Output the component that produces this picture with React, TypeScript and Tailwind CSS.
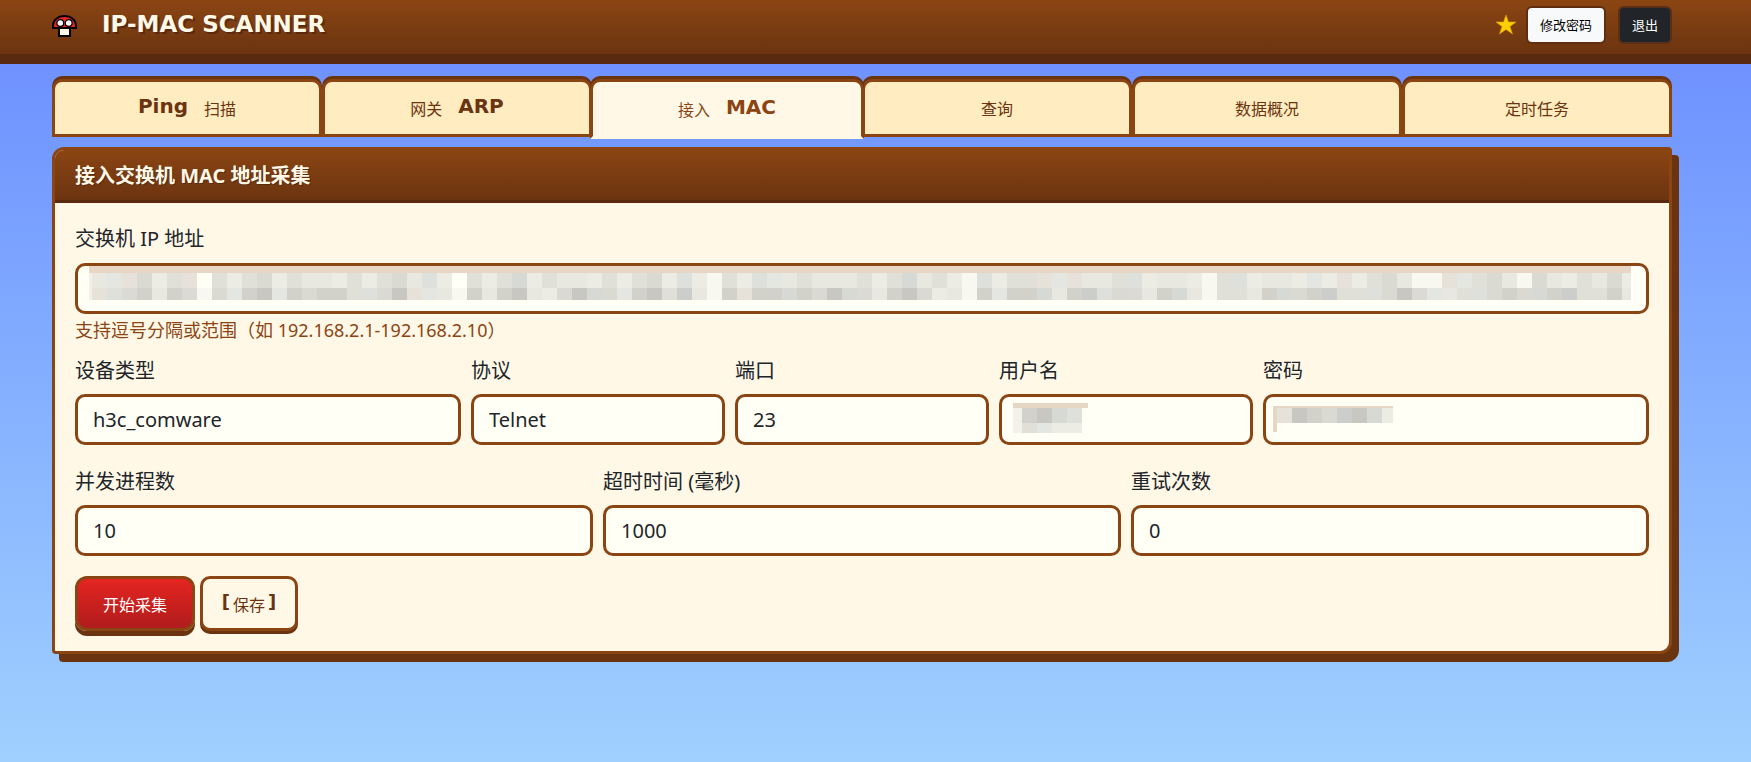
import { useState, type ReactNode } from "react";
import { clsx } from "clsx";

interface Tab {
  id: string;
  before?: string;
  label?: string;
  after?: string;
}

const TABS: Tab[] = [
  { id: "ping", before: "Ping", label: "扫描" },
  { id: "arp", label: "网关", after: "ARP" },
  { id: "mac", label: "接入", after: "MAC" },
  { id: "query", label: "查询" },
  { id: "stats", label: "数据概况" },
  { id: "cron", label: "定时任务" },
];

const PIXEL_FONT = "font-['DejaVu_Sans','Noto_Sans_CJK_SC',sans-serif] font-bold";
const CJK_FONT = "font-['Noto_Sans_CJK_SC',sans-serif] font-normal";

const INPUT_CLASS =
  "block h-[51px] w-full appearance-none rounded-[10px] border-3 border-[#8b4513] bg-[#fffff5] px-[15px] text-xl text-[#212529] outline-none";

// Shades used by the redaction mosaic, keyed by a single letter
const SHADES: Record<string, string> = {
  a: "#fffff5",
  b: "#f8f8f0",
  c: "#ecece4",
  d: "#e8e8e0",
  e: "#e0e0d9",
  f: "#dadad2",
  g: "#d2d2ca",
  h: "#c8c7c2",
  p: "#e6e2da",
  q: "#dcdad5",
  s: "#dde0db",
  t: "#d6d9d4",
  u: "#cbceca",
  w: "#e4e6e1",
  x: "#f5f1ea",
};

const IP_ROWS = [
  "dwpfcepaecefceddcecefdscaecetceddcecefcscbecswdedddecetdecbsceepwpddescddcbescddcwcpcefdbbpwefdbfdcedfc",
  "psqgdgqbfwghwgfggesfhpwdbgdghdcfhtfwgheudbgpggtgfhtqdghfcdbgwggtdgusfqdgtdbeedgtfgueesfhqwdesfgftgueegdqe",
];

function Mosaic({ row, y, height, x = 0 }: { row: string; y: number; height: number; x?: number }) {
  return (
    <>
      {row.split("").map((shade, i) => (
        <rect key={i} x={x + i * 15} y={y} width={15} height={height} fill={SHADES[shade]} />
      ))}
    </>
  );
}

function MushroomIcon() {
  return (
    <svg width="25" height="22" viewBox="0 0 25 22" aria-hidden="true">
      <path
        d="M1 13V10.500C1 5 6 1 12.500 1S24 5 24 10.500V13z"
        fill="#e52521"
        stroke="#000"
        strokeWidth="2"
      />
      <rect x="7" y="13" width="11" height="8" fill="#fff8e7" stroke="#000" strokeWidth="2" />
      <circle cx="8.300" cy="8" r="3.400" fill="#fff" stroke="#000" strokeWidth="1.200" />
      <circle cx="16.700" cy="8" r="3.400" fill="#fff" stroke="#000" strokeWidth="1.200" />
    </svg>
  );
}

function StarIcon() {
  return (
    <svg width="20" height="20" viewBox="0 0 20 20" aria-hidden="true">
      <path
        d="M10 0l2.500 7H20l-6 4.500 2.500 7.500L10 14.500 3.500 19 6 11.500 0 7h7.500z"
        fill="#fbd000"
        stroke="#e0a000"
        strokeWidth="0.6"
      />
    </svg>
  );
}

function Field({
  id,
  label,
  className,
  children,
}: {
  id: string;
  label: string;
  className?: string;
  children: ReactNode;
}) {
  return (
    <div className={className}>
      <label htmlFor={id} className="mb-2 block text-xl leading-[30px] text-[#212529]">
        {label}
      </label>
      <div className="relative">{children}</div>
    </div>
  );
}

export default function App() {
  const [activeTab, setActiveTab] = useState("mac");

  return (
    <div className="min-h-screen bg-linear-to-b from-[#6b8cff] to-[#a0d0ff] font-['Noto_Sans','Noto_Sans_CJK_SC',sans-serif]">
      <header className="flex h-16 justify-between border-b-10 border-[#5a2a10] bg-linear-to-b from-[#8b4513] to-[#6b3410] pr-[79px] pl-[52px]">
        <div className="flex h-[52px] items-center gap-[25px]">
          <MushroomIcon />
          <h1
            className={clsx(
              PIXEL_FONT,
              "pb-1 text-[23px] leading-none text-[#fff8e7] [text-shadow:2px_2px_0_#5a2a10]"
            )}
          >
            IP-MAC SCANNER
          </h1>
        </div>
        <div className="flex h-[50px] items-center">
          <StarIcon />
          <button
            className={clsx(
              CJK_FONT,
              "ml-[10px] h-[38px] rounded-md border-2 border-[#5f2e10] bg-[#f8f9fa] px-3 text-[13px] text-black"
            )}
          >
            修改密码
          </button>
          <button
            className={clsx(
              CJK_FONT,
              "ml-3 h-[38px] rounded-md border-2 border-[#5a2f17] bg-[#212529] px-3 text-[13px] text-white"
            )}
          >
            退出
          </button>
        </div>
      </header>

      <main className="pt-[15px] pr-[79px] pb-10 pl-[52px]">
        <nav className="grid grid-cols-6">
          {TABS.map((tab) => {
            const active = tab.id === activeTab;
            return (
              <button
                key={tab.id}
                onClick={() => setActiveTab(tab.id)}
                className={clsx(
                  "flex items-center justify-center gap-4 rounded-t-[10px] border-3 border-[#8b4513] pb-1 shadow-[0_-3px_0_#6b3410]",
                  active
                    ? "z-10 -mx-[2px] -mb-[2px] h-[60px] border-b-[#fff8e7] bg-[#fff8e7] text-[#8b4513]"
                    : "h-[58px] bg-[#ffecc1] text-[#6b3410]"
                )}
              >
                {tab.before && (
                  <span className={clsx(PIXEL_FONT, "text-xl leading-5")}>{tab.before}</span>
                )}
                <span className={clsx(CJK_FONT, "pt-1 text-base leading-5")}>{tab.label}</span>
                {tab.after && (
                  <span className={clsx(PIXEL_FONT, "text-xl leading-5")}>{tab.after}</span>
                )}
              </button>
            );
          })}
        </nav>

        <section className="mt-[10px] rounded-[12px_4px_12px_4px] border-3 border-[#8b4513] bg-[#fff8e7] shadow-[7px_8px_0_#6b3410]">
          <h2 className="rounded-tl-[9px] border-b-3 border-[#5a2a10] bg-linear-to-b from-[#8b4513] to-[#6b3410] px-5 pt-[11px] pb-[9px] text-xl leading-[30px] font-bold text-[#fff8e7] [text-shadow:1px_1px_0_#5a2a10]">
            接入交换机 MAC 地址采集
          </h2>

          <form className="px-5 pt-[21px] pb-5" onSubmit={(e) => e.preventDefault()}>
            <Field id="ips" label="交换机 IP 地址">
              <input id="ips" className={clsx(INPUT_CLASS, "mt-[9px]")} />
              <svg
                className="pointer-events-none absolute top-[3px] left-[14px] h-[34px] w-[calc(100%-32px)]"
                viewBox="0 0 1542 34"
                preserveAspectRatio="none"
                shapeRendering="crispEdges"
                aria-hidden="true"
              >
                <rect width="1542" height="7" fill="#e8d6c4" />
                <rect y="7" width="3" height="27" fill="#f5efe4" />
                <Mosaic row={IP_ROWS[0]} x={3} y={7} height={15} />
                <Mosaic row={IP_ROWS[1]} x={3} y={22} height={12} />
              </svg>
            </Field>
            <p className="mt-[3px] text-lg leading-[27px] text-[#8b4513]">
              支持逗号分隔或范围（如 192.168.2.1-192.168.2.10）
            </p>

            <div className="mt-3 grid grid-cols-12 gap-x-[10px] gap-y-[22px]">
              <Field id="device" label="设备类型" className="col-span-3">
                <select id="device" className={INPUT_CLASS} defaultValue="h3c_comware">
                  <option>h3c_comware</option>
                </select>
              </Field>
              <Field id="protocol" label="协议" className="col-span-2">
                <select id="protocol" className={INPUT_CLASS} defaultValue="Telnet">
                  <option>Telnet</option>
                  <option>SSH</option>
                </select>
              </Field>
              <Field id="port" label="端口" className="col-span-2">
                <input id="port" className={INPUT_CLASS} defaultValue="23" />
              </Field>
              <Field id="username" label="用户名" className="col-span-2">
                <input id="username" className={INPUT_CLASS} />
                <svg
                  className="pointer-events-none absolute top-[9px] left-[14px]"
                  width="75"
                  height="30"
                  shapeRendering="crispEdges"
                  aria-hidden="true"
                >
                  <rect width="75" height="5" fill="#e6d6c4" />
                  <rect y="5" width="9" height="25" fill="#f5f1ea" />
                  <Mosaic row="ghts" x={9} y={5} height={15} />
                  <Mosaic row="ewcc" x={9} y={20} height={10} />
                </svg>
              </Field>
              <Field id="password" label="密码" className="col-span-3">
                <input id="password" type="password" className={INPUT_CLASS} />
                <svg
                  className="pointer-events-none absolute top-[12px] left-[10px]"
                  width="120"
                  height="26"
                  shapeRendering="crispEdges"
                  aria-hidden="true"
                >
                  <Mosaic row="phgfuhtc" x={4} y={2} height={15} />
                  <rect width="120" height="2" fill="#e8d6c4" />
                  <rect width="4" height="26" fill="#e8d6c4" />
                </svg>
              </Field>

              <Field id="workers" label="并发进程数" className="col-span-4">
                <input id="workers" className={INPUT_CLASS} defaultValue="10" />
              </Field>
              <Field id="timeout" label="超时时间 (毫秒)" className="col-span-4">
                <input id="timeout" className={INPUT_CLASS} defaultValue="1000" />
              </Field>
              <Field id="retries" label="重试次数" className="col-span-4">
                <input id="retries" className={INPUT_CLASS} defaultValue="0" />
              </Field>
            </div>

            <div className="mt-5 flex items-start gap-[5px]">
              <button
                type="submit"
                className={clsx(
                  CJK_FONT,
                  "h-[55px] w-[120px] rounded-xl border-3 border-[#8b4513] bg-linear-to-b from-[#e52521] to-[#b01c1c] text-base text-white shadow-[0_5px_0_#6b3410]"
                )}
              >
                开始采集
              </button>
              <button
                type="button"
                className="flex h-[55px] w-[98px] items-center justify-center gap-[3px] rounded-[10px] border-3 border-[#8b4513] bg-[#fff8e7] text-[#6b3410] shadow-[0_3px_0_#6b3410]"
              >
                <span className={clsx(PIXEL_FONT, "pb-1 text-lg leading-5")}>[</span>
                <span className={clsx(CJK_FONT, "text-base leading-5")}>保存</span>
                <span className={clsx(PIXEL_FONT, "pb-1 text-lg leading-5")}>]</span>
              </button>
            </div>
          </form>
        </section>
      </main>
    </div>
  );
}
